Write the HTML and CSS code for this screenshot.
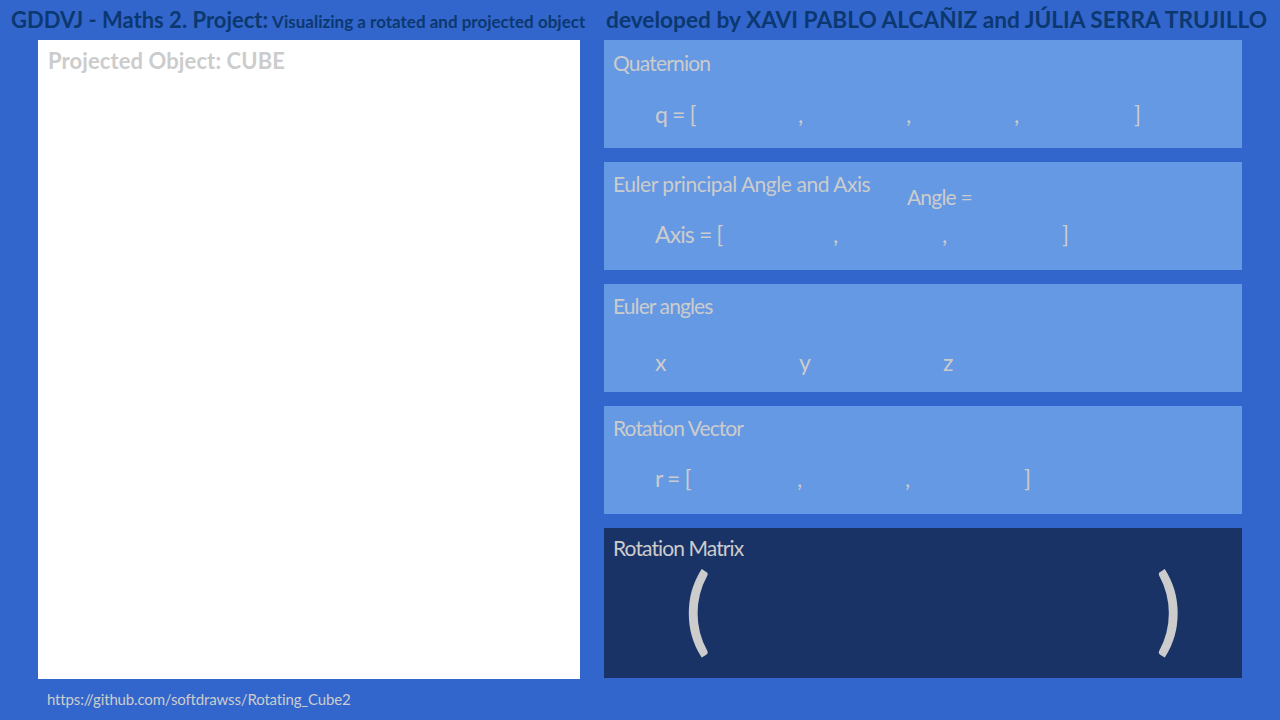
FILE: index.html
```html
<!DOCTYPE html>
<html>
<head>
<meta charset="utf-8">
<link rel="stylesheet" href="styles.css">
</head>
<body>
<div class="page">
  <header class="header">
    <div class="title-left"><span class="big">GDDVJ - Maths 2. Project:</span> <span class="small">Visualizing a rotated and projected object</span></div>
    <div class="title-right"><span class="big-right">developed by XAVI PABLO ALCAÑIZ and JÚLIA SERRA TRUJILLO</span></div>
  </header>
  <main class="main">
    <section class="canvas">
      <div class="canvas-title">Projected Object: CUBE</div>
    </section>
    <section class="panels">
      <div class="panel p-quat">
        <div class="panel-title">Quaternion</div>
        <div class="row q-row">
          <span class="cell w143">q = [</span><span class="cell w108">,</span><span class="cell w108">,</span><span class="cell w120">,</span><span class="cell">]</span>
        </div>
      </div>
      <div class="panel p-axis">
        <div class="panel-head">
          <div class="panel-title head-title">Euler principal Angle and Axis</div>
          <div class="angle">Angle =</div>
        </div>
        <div class="row axis-row">
          <span class="cell w178">Axis = [</span><span class="cell w109">,</span><span class="cell w120">,</span><span class="cell">]</span>
        </div>
      </div>
      <div class="panel p-euler">
        <div class="panel-title">Euler angles</div>
        <div class="row euler-row">
          <span class="cell w144">x</span><span class="cell w144">y</span><span class="cell">z</span>
        </div>
      </div>
      <div class="panel p-rvec">
        <div class="panel-title">Rotation Vector</div>
        <div class="row r-row">
          <span class="cell w142">r = [</span><span class="cell w108">,</span><span class="cell w119">,</span><span class="cell">]</span>
        </div>
      </div>
      <div class="panel dark">
        <div class="panel-title">Rotation Matrix</div>
        <div class="matrix">
          <span class="paren paren-open">(</span><span class="paren">)</span>
        </div>
      </div>
    </section>
  </main>
  <footer class="footer">https://github.com/softdrawss/Rotating_Cube2</footer>
</div>
</body>
</html>
```
FILE: styles.css
```css
html, body {
  margin: 0;
  padding: 0;
}
body {
  background: #3366cc;
  font-family: Lato, "Open Sans", sans-serif;
  color: #cccccc;
}
.page {
  width: 1280px;
  height: 720px;
  display: flex;
  flex-direction: column;
}
.header {
  height: 40px;
  box-sizing: border-box;
  padding-top: 7px;
  display: flex;
  color: #0b3870;
  font-weight: bold;
  white-space: nowrap;
  line-height: 25px;
}
.title-left {
  width: 606px;
  padding-left: 11px;
  box-sizing: border-box;
}
.title-right {
  flex: 1;
}
.big {
  font-size: 22px;
}
.big-right {
  font-size: 22.7px;
}
.small {
  font-size: 17px;
}
.main {
  display: flex;
  height: 639px;
}
.canvas {
  margin-left: 38px;
  width: 542px;
  height: 639px;
  background: #ffffff;
  box-sizing: border-box;
  padding: 8px 10px;
}
.canvas-title {
  font-size: 22px;
  line-height: 25px;
  letter-spacing: 0.1px;
  font-weight: bold;
  color: #cccccc;
}
.panels {
  margin-left: 24px;
  width: 638px;
  display: flex;
  flex-direction: column;
  gap: 14px;
}
.panel {
  height: 108px;
  background: #6699e3;
  box-sizing: border-box;
  padding: 9px 9px 0;
  display: flex;
  flex-direction: column;
}
.p-quat { padding-top: 10px; }
.panel.dark {
  height: 150px;
  background: #1a3366;
  padding-top: 7px;
}
.panel-title {
  font-size: 21px;
  line-height: 26px;
  letter-spacing: -0.9px;
  white-space: nowrap;
}
.p-quat .panel-title {
  letter-spacing: -0.8px;
}
.panel-head {
  display: flex;
}
.head-title {
  width: 294px;
  letter-spacing: -0.45px;
}
.p-axis .head-title {
  letter-spacing: -0.45px;
}
.angle {
  margin-top: 13px;
  font-size: 21px;
  line-height: 26px;
  letter-spacing: -0.8px;
}
.row {
  display: flex;
  font-size: 23px;
  line-height: 30px;
  letter-spacing: -0.9px;
  padding-left: 42px;
}
.q-row { margin-top: 23px; }
.axis-row { margin-top: 9px; }
.euler-row { margin-top: 28px; }
.r-row { margin-top: 22px; }
.cell {
  white-space: nowrap;
}
.w108 { width: 108px; }
.w109 { width: 109px; }
.w119 { width: 119px; }
.w120 { width: 120px; }
.w142 { width: 142px; }
.w143 { width: 143px; }
.w144 { width: 144px; }
.w178 { width: 178px; }
.matrix {
  display: flex;
  padding-left: 72px;
  margin-top: -2px;
}
.paren {
  font-size: 94px;
  line-height: 96px;
  font-weight: 600;
}
.paren-open {
  width: 471px;
}
.footer {
  padding: 10px 0 0 47px;
  font-size: 15px;
  line-height: 20px;
  letter-spacing: -0.15px;
}
```
